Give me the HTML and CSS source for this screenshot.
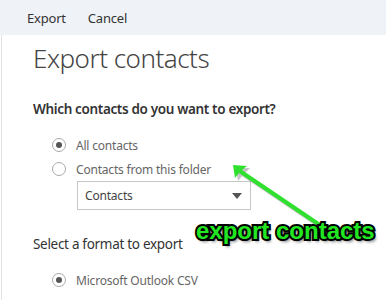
FILE: index.html
```html
<html>
<head>
    <title>Export contacts</title>
    <meta charset="UTF-8">
    <meta name="viewport" content="width=device-width, initial-scale=1.0">
    <link rel="stylesheet" href="styles.css">
</head>

<body>
    <div class="toolbar">
        <span class="cmd">Export</span>
        <span class="cmd">Cancel</span>
    </div>

    <div class="panel">
        <h1>Export contacts</h1>

        <h2>Which contacts do you want to export?</h2>
        <div class="options">
            <div class="option"><span class="radio checked"></span>All contacts</div>
            <div class="option"><span class="radio"></span>Contacts from this folder</div>
            <div class="dropdown">
                <span>Contacts</span>
                <span class="caret"></span>
            </div>
        </div>

        <h3>Select a format to export</h3>
        <div class="options">
            <div class="option"><span class="radio checked"></span>Microsoft Outlook CSV</div>
        </div>
    </div>

    <!-- annotation -->
    <svg class="arrow" width="387" height="300" viewBox="0 0 387 300">
        <polygon points="234,166 248,166 243,171 323,225 320,228 240,174 236,179" fill="#555" opacity="0.35" transform="translate(2,2)"/>
        <polygon points="233,165 247,166 242,170 322,224 319,227 239,173 235,178" fill="#2fe02f"/>
    </svg>
    <div class="callout">export contacts</div>
</body>
</html>
```

FILE: styles.css
```css
/* page */
body {
    margin: 0;
    font-family: "Noto Sans", "Open Sans", sans-serif;
    background: #fff;
    width: 387px;
    height: 300px;
    overflow: hidden;
    position: relative;
}

.toolbar {
    height: 35px;
    margin-right: 1px;
    background-color: #eff2f7;
    display: flex;
    align-items: center;
    padding-left: 27px;
    gap: 22px;
}

.cmd {
    font-size: 13px;
    letter-spacing: -0.2px;
    color: #333;
}

.panel {
    border-left: 1px solid #e3e3e3;
    margin-left: 1px;
    padding-left: 31px;
    height: 265px;
}

h1 {
    margin: 0;
    padding-top: 5px;
    font-size: 26px;
    letter-spacing: -0.5px;
    font-weight: 300;
    color: #444;
    line-height: 36px;
}

h2 {
    margin: 23px 0 0 0;
    font-size: 13.5px;
    letter-spacing: -0.35px;
    font-weight: 600;
    color: #333;
    line-height: 20px;
}

h3 {
    margin: 24px 0 0 0;
    font-size: 13.5px;
    letter-spacing: -0.3px;
    font-weight: 400;
    color: #333;
    line-height: 20px;
}

.options {
    padding-left: 19px;
    margin-top: 14px;
}

.option {
    display: flex;
    align-items: center;
    height: 24px;
    font-size: 12px;
    letter-spacing: -0.2px;
    color: #666;
}

.radio {
    width: 12px;
    height: 12px;
    border: 1px solid #aaa;
    border-radius: 50%;
    margin-right: 10px;
    box-sizing: content-box;
    display: flex;
    align-items: center;
    justify-content: center;
}

.radio.checked::after {
    content: "";
    width: 6px;
    height: 6px;
    border-radius: 50%;
    background: #555;
}

.dropdown {
    margin-left: 25px;
    width: 157px;
    height: 27px;
    border: 1px solid #c6c6c6;
    display: flex;
    align-items: center;
    justify-content: space-between;
    padding: 0 8px 0 7px;
    font-size: 12px;
    letter-spacing: -0.2px;
    color: #444;
    box-sizing: content-box;
}

.caret {
    width: 0;
    height: 0;
    border-left: 5px solid transparent;
    border-right: 5px solid transparent;
    border-top: 6px solid #555;
}

/* annotation over the page */
.arrow {
    position: absolute;
    left: 0;
    top: 0;
}

.callout {
    position: absolute;
    left: 196px;
    top: 217px;
    font-family: "Liberation Sans", Arial, sans-serif;
    font-weight: bold;
    font-size: 24px;
    color: #22e622;
    -webkit-text-stroke: 4px #000;
    paint-order: stroke fill;
    text-shadow: 2px 3px 3px rgba(0, 0, 0, 0.5);
}
```
